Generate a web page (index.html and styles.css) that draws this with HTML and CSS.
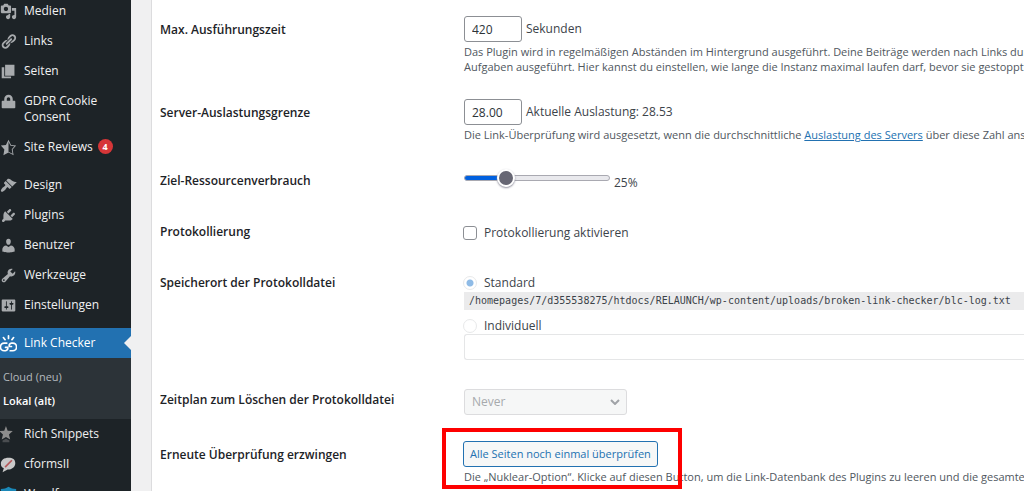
FILE: index.html
```html
<!DOCTYPE html>
<html lang="de">
<head>
    <meta charset="UTF-8">
    <title>Link Checker</title>
    <link rel="stylesheet" href="styles.css">
</head>
<body>
    <nav class="sidebar">
        <ul class="menu">
            <li><a href="#"><svg class="icon" viewBox="0 0 20 20"><path d="M13 11V4c0-.55-.45-1-1-1h-1.67L9 1H5L3.67 3H2c-.55 0-1 .45-1 1v7c0 .55.45 1 1 1h10c.55 0 1-.45 1-1zM7 4.5c1.38 0 2.5 1.12 2.5 2.5S8.38 9.5 7 9.5 4.5 8.38 4.5 7 5.62 4.5 7 4.5zM14 6h5v10.5c0 1.38-1.12 2.5-2.5 2.5S14 17.88 14 16.5s1.12-2.5 2.5-2.5c.17 0 .34.02.5.05V9h-3V6zm-4 8.05V13h2v3.5c0 1.38-1.12 2.5-2.5 2.5S7 17.88 7 16.5 8.12 14 9.5 14c.17 0 .34.02.5.05z"/></svg><span>Medien</span></a></li>
            <li><a href="#"><svg class="icon" viewBox="0 0 20 20"><path d="M17.74 2.76c1.68 1.69 1.68 4.41 0 6.1l-1.53 1.52c-1.12 1.12-2.7 1.47-4.14 1.09l2.62-2.61.76-.77.76-.76c.84-.84.84-2.2 0-3.04-.84-.85-2.2-.85-3.04 0l-.77.76-3.38 3.38c-.37-1.44-.02-3.02 1.1-4.14l1.52-1.53c1.69-1.68 4.42-1.68 6.1 0zM8.59 13.43l5.34-5.34c.42-.42.42-1.1 0-1.52-.44-.43-1.13-.39-1.53 0l-5.33 5.34c-.42.42-.42 1.1 0 1.52.44.43 1.13.39 1.52 0zm-.76 2.29l4.14-4.15c.38 1.44.03 3.02-1.09 4.14l-1.52 1.53c-1.69 1.68-4.41 1.68-6.1 0-1.68-1.68-1.68-4.42 0-6.1l1.53-1.52c1.12-1.12 2.7-1.47 4.14-1.1l-4.14 4.15c-.85.84-.85 2.2 0 3.05.84.84 2.2.84 3.04 0z"/></svg><span>Links</span></a></li>
            <li><a href="#"><svg class="icon" viewBox="0 0 20 20"><path d="M6 15V2h11v13H6zm-1 1h8v2H2V5h3v11z"/></svg><span>Seiten</span></a></li>
            <li><a href="#"><svg class="icon" viewBox="0 0 20 20"><path d="M15 9h2c.55 0 1 .45 1 1v7c0 .55-.45 1-1 1H3c-.55 0-1-.45-1-1v-7c0-.55.45-1 1-1h2V7c0-2.8 2.2-5 5-5s5 2.2 5 5v2zm-3 0V7c0-1.1-.9-2-2-2s-2 .9-2 2v2h4z"/></svg><span>GDPR Cookie Consent</span></a></li>
            <li><a href="#"><svg class="icon" viewBox="0 0 20 20"><path d="M10 1L7 7l-6 .75 4.13 4.62L4 19l6-3 6 3-1.12-6.63L19 7.75 13 7zm0 2.24l2.34 4.69 4.65.58-3.18 3.56.87 5.15L10 14.88V3.24z"/></svg><span>Site Reviews</span><b class="count">4</b></a></li>
            <li class="first"><a href="#"><svg class="icon" viewBox="0 0 20 20"><path d="M14.48 11.06L7.41 3.99l1.5-1.5c.5-.56 2.3-.47 3.51.32 1.21.8 1.43 1.28 2.91 2.1 1.18.64 2.45 1.26 4.45.85zm-.71.71L6.7 4.7 4.93 6.47c-.39.39-.39 1.02 0 1.41l1.06 1.06c.39.39.39 1.03 0 1.42-.6.6-1.43 1.11-2.21 1.69-.35.26-.7.53-1.01.84C1.43 14.23.4 16.08 1.4 17.07c.99 1 2.84-.03 4.18-1.36.31-.31.58-.66.85-1.02.57-.78 1.08-1.61 1.69-2.21.39-.39 1.02-.39 1.41 0l1.06 1.06c.39.39 1.02.39 1.41 0z"/></svg><span>Design</span></a></li>
            <li><a href="#"><svg class="icon" viewBox="0 0 20 20"><path d="M13.11 4.36L9.87 7.6 8 5.73l3.24-3.24c.35-.34 1.05-.2 1.56.32.52.51.66 1.21.31 1.55zm-8 1.77l.91-1.12 9.01 9.01-1.19.84c-.71.71-2.63 1.16-3.82 1.16H6.14L4.9 17.26c-.59.59-1.54.59-2.12 0-.59-.58-.59-1.53 0-2.12l1.24-1.24v-3.88c0-1.13.4-3.19 1.09-3.89zm7.26 3.97l3.24-3.24c.34-.35 1.04-.21 1.55.31.52.51.66 1.21.31 1.55l-3.24 3.25z"/></svg><span>Plugins</span></a></li>
            <li><a href="#"><svg class="icon" viewBox="0 0 20 20"><path d="M10 9.25c-2.27 0-2.73-3.44-2.73-3.44C7 4.02 7.82 2 9.97 2c2.16 0 2.98 2.02 2.71 3.81 0 0-.41 3.44-2.68 3.44zm0 2.57L12.72 10c2.39 0 4.52 2.33 4.52 4.53v2.49s-3.65 1.13-7.24 1.13c-3.65 0-7.24-1.13-7.24-1.13v-2.49c0-2.25 1.94-4.48 4.47-4.48z"/></svg><span>Benutzer</span></a></li>
            <li><a href="#"><svg class="icon" viewBox="0 0 20 20"><path d="M16.68 9.77c-1.34 1.34-3.3 1.67-4.95.99l-5.41 6.52c-.99.99-2.59.99-3.58 0s-.99-2.59 0-3.57l6.52-5.42c-.68-1.65-.35-3.61.99-4.95 1.28-1.28 3.12-1.62 4.72-1.06l-2.89 2.89 2.82 2.82 2.86-2.87c.53 1.58.18 3.39-1.08 4.65zM3.81 16.21c.4.39 1.04.39 1.43 0 .4-.4.4-1.04 0-1.43-.39-.4-1.03-.4-1.43 0-.39.39-.39 1.03 0 1.43z"/></svg><span>Werkzeuge</span></a></li>
            <li><a href="#"><svg class="icon" viewBox="0 0 20 20"><path d="M18 16V4c0-.55-.45-1-1-1H3c-.55 0-1 .45-1 1v12c0 .55.45 1 1 1h14c.55 0 1-.45 1-1zM8 11h1c.55 0 1 .45 1 1s-.45 1-1 1H8v1.5c0 .28-.22.5-.5.5s-.5-.22-.5-.5V13H6c-.55 0-1-.45-1-1s.45-1 1-1h1V5.5c0-.28.22-.5.5-.5s.5.22.5.5V11zm5-2h-1c-.55 0-1-.45-1-1s.45-1 1-1h1V5.5c0-.28.22-.5.5-.5s.5.22.5.5V7h1c.55 0 1 .45 1 1s-.45 1-1 1h-1v5.5c0 .28-.22.5-.5.5s-.5-.22-.5-.5V9z"/></svg><span>Einstellungen</span></a></li>
            <li class="first active">
                <a href="#"><svg class="icon line" viewBox="0 0 20 20"><path d="M10 1v3M4 3l2 2.500M16 3l-2 2.500M8 9.500H5a4.500 4.500 0 0 0 0 9h1.500a3 3 0 0 0 2.500-4H6.500M12 18.500h3a4.500 4.500 0 0 0 0-9h-1.500a3 3 0 0 0-2.500 4h2.500"/></svg><span>Link Checker</span></a>
                <ul class="submenu">
                    <li><a href="#">Cloud (neu)</a></li>
                    <li><a href="#" class="current">Lokal (alt)</a></li>
                </ul>
            </li>
            <li><a href="#"><svg class="icon dim" viewBox="0 0 20 20"><path d="M7 0l2 5.500 6 .5-4.500 4 1.500 6-5-3-5 3 1.500-6L-1 6l6-.5z"/><path class="shade" d="M3 17l4-2 4 2v2H3z"/></svg><span>Rich Snippets</span></a></li>
            <li><a href="#"><svg class="icon" viewBox="0 0 20 20"><path class="bubble" d="M10 2c5 0 8 2 8 6.500S14 16 9 16l-6 3 1.500-4.500C2 13 1 11.500 1 9c0-4.500 4-7 9-7z"/><path class="pen" d="M6 13l8-8"/></svg><span>cformsII</span></a></li>
            <li><a href="#"><svg class="icon shield" viewBox="0 0 20 20"><path d="M10 1c3 2 5 2.500 9 2.500V11c0 4-4 7-9 9-5-2-9-5-9-9V3.500C5 3.500 7 3 10 1z"/></svg><span>Wordfence</span></a></li>
        </ul>
    </nav>
    <main class="content">
        <form class="panel">
            <table class="form-table">
                <tr>
                    <th><label for="max-time">Max. Ausführungszeit</label></th>
                    <td>
                        <div class="field"><input class="small" type="text" id="max-time" value="420"> <span>Sekunden</span></div>
                        <p>Das Plugin wird in regelmäßigen Abständen im Hintergrund ausgeführt. Deine Beiträge werden nach Links durchsucht<br>Aufgaben ausgeführt. Hier kannst du einstellen, wie lange die Instanz maximal laufen darf, bevor sie gestoppt wird.</p>
                    </td>
                </tr>
                <tr>
                    <th><label for="load">Server-Auslastungsgrenze</label></th>
                    <td>
                        <div class="field"><input class="small" type="text" id="load" value="28.00"> <span>Aktuelle Auslastung: 28.53</span></div>
                        <p>Die Link-Überprüfung wird ausgesetzt, wenn die durchschnittliche <a href="#">Auslastung des Servers</a> über diese Zahl ansteigt.</p>
                    </td>
                </tr>
                <tr class="row-slider">
                    <th><label for="usage">Ziel-Ressourcenverbrauch</label></th>
                    <td>
                        <div class="slider"><input type="range" id="usage" min="0" max="100" value="25"><output for="usage">25%</output></div>
                    </td>
                </tr>
                <tr class="row-check">
                    <th>Protokollierung</th>
                    <td><label class="choice"><input type="checkbox"><span>Protokollierung aktivieren</span></label></td>
                </tr>
                <tr class="row-log">
                    <th>Speicherort der Protokolldatei</th>
                    <td>
                        <label class="choice"><input type="radio" name="log" checked disabled><span>Standard</span></label>
                        <code>/homepages/7/d355538275/htdocs/RELAUNCH/wp-content/uploads/broken-link-checker/blc-log.txt</code>
                        <label class="choice"><input type="radio" name="log" disabled><span>Individuell</span></label>
                        <input class="path" type="text" aria-label="Individuell" disabled>
                    </td>
                </tr>
                <tr class="row-plan">
                    <th><label for="plan">Zeitplan zum Löschen der Protokolldatei</label></th>
                    <td>
                        <div class="select">
                            <select id="plan" disabled><option>Never</option></select>
                            <svg viewBox="0 0 10 6"><path d="M1 1l4 4 4-4"/></svg>
                        </div>
                    </td>
                </tr>
                <tr>
                    <th>Erneute Überprüfung erzwingen</th>
                    <td>
                        <div class="recheck">
                            <button type="button">Alle Seiten noch einmal überprüfen</button>
                            <p>Die „Nuklear-Option“. Klicke auf diesen Button, um die Link-Datenbank des Plugins zu leeren und die gesamte Website</p>
                            <span class="marker"></span>
                        </div>
                    </td>
                </tr>
            </table>
        </form>
    </main>
</body>
</html>
```
FILE: styles.css
```css
*{
    box-sizing: border-box;
    margin: 0;
    padding: 0;
}
body{
    display: flex;
    height: 100vh;
    overflow: hidden;
    background: #f0f0f1;
    color: #3c434a;
    font: 12px/16px "Open Sans", "Noto Sans", sans-serif;
}
ul{
    list-style: none;
}
.sidebar{
    flex: 0 0 131px;
    background: #1d2327;
}
.menu{
    margin-top: -4px;
}
.menu a{
    display: flex;
    padding: 7px 0;
    color: #f0f0f1;
    text-decoration: none;
}
.menu .first{
    margin-top: 8px;
}
.icon{
    flex: none;
    width: 17px;
    height: 17px;
    margin: 0 7px -1px 0;
    fill: #a7aaad;
}
.line{
    fill: none;
    stroke: #fff;
    stroke-width: 2;
    stroke-linecap: round;
}
.dim{
    fill: #8c8c8c;
}
.shade{
    fill: #4a4d50;
}
.bubble{
    fill: #c9c9c9;
}
.pen{
    stroke: #b5585a;
    stroke-width: 2;
}
.shield{
    fill: #1b88b8;
}
.count{
    width: 15px;
    height: 15px;
    margin-left: 5px;
    border-radius: 50%;
    background: #d63638;
    color: #fff;
    font-size: 9px;
    line-height: 15px;
    text-align: center;
}
.active > a{
    position: relative;
    background: #2271b1;
    color: #fff;
}
.active > a::after{
    content: "";
    position: absolute;
    top: 8px;
    right: 0;
    border: 7px solid transparent;
    border-left: 0;
    border-right-color: #f0f0f1;
}
.submenu{
    padding: 7px 3px 6px;
    background: #2c3338;
}
.submenu a{
    padding: 4px 0;
    color: #b4b9be;
    font-size: 11px;
}
.submenu .current{
    color: #fff;
    font-weight: 600;
}
.content{
    flex: 1;
    min-width: 0;
    padding-left: 20px;
}
.panel{
    height: 100%;
    padding: 3px 0 0 8px;
    border-left: 1px solid #dcdcde;
    background: #fff;
    overflow: hidden;
}
.form-table{
    width: 100%;
    table-layout: fixed;
    border-collapse: collapse;
}
th{
    width: 304px;
    padding-top: 19px;
    color: #1d2327;
    font-weight: 600;
    text-align: left;
    vertical-align: top;
}
td{
    padding: 13px 0 12px;
    vertical-align: top;
    white-space: nowrap;
}
p{
    margin-top: 2px;
    color: #50575e;
    font-size: 11px;
    line-height: 15px;
}
p a{
    color: #2271b1;
}
input, select, button{
    font: inherit;
    color: #2c3338;
}
.field{
    display: flex;
    align-items: center;
    gap: 4px;
}
.small{
    width: 58px;
    height: 26px;
    padding: 0 7px;
    border: 1px solid #8c8f94;
    border-radius: 3px;
}
.row-slider td{
    padding: 16px 0 14px;
}
.slider{
    display: flex;
    gap: 4px;
}
output{
    padding-top: 5px;
}
input[type="range"]{
    appearance: none;
    width: 146px;
    height: 16px;
    border-radius: 3px;
    background: none;
}
input[type="range"]::-webkit-slider-runnable-track{
    height: 6px;
    border: 1px solid #a9a9b1;
    border-radius: 3px;
    background: linear-gradient(to right, #0060df 28%, #e9e9ed 28%) border-box;
}
input[type="range"]::-webkit-slider-thumb{
    appearance: none;
    width: 18px;
    height: 18px;
    margin-top: -7px;
    border: 2px solid #fff;
    border-radius: 50%;
    background: #676774;
    box-shadow: 0 1px 2px #8f8f9d;
}
.row-check td{
    padding: 20px 0 15px;
}
.choice{
    display: flex;
    align-items: center;
    gap: 7px;
    height: 16px;
}
.choice input{
    appearance: none;
    width: 14px;
    height: 14px;
    margin-left: -1px;
    border: 1px solid #8c8f94;
    border-radius: 3px;
}
.choice input[type="radio"]{
    border-color: #e8e9ea;
    border-radius: 50%;
}
.choice input[type="radio"]:checked{
    background: radial-gradient(circle, #8fbbe6 3px, #fff 4px);
}
.row-log td{
    padding: 19px 0 13px;
}
code{
    display: block;
    height: 18px;
    margin: 1px 0 8px;
    padding: 0 5px;
    background: #ebebec;
    font: 10px/18px "DejaVu Sans Mono", monospace;
}
.path{
    display: block;
    width: 100%;
    height: 26px;
    border: 1px solid #e5e6e7;
    border-right: 0;
    border-radius: 3px 0 0 3px;
    background: #fff;
}
.row-plan td{
    padding: 16px 0 13px;
}
.select{
    position: relative;
    width: 163px;
}
.select select{
    display: block;
    appearance: none;
    width: 100%;
    height: 26px;
    padding: 0 7px;
    border: 1px solid #dcdcde;
    border-radius: 3px;
    background: #f6f7f7;
    color: #a7aaad;
    opacity: 1;
}
.select svg{
    position: absolute;
    top: 10px;
    right: 7px;
    width: 10px;
    height: 6px;
    fill: none;
    stroke: #a0a3a7;
    stroke-width: 2;
}
.recheck{
    position: relative;
}
button{
    display: block;
    height: 26px;
    padding: 0 6px;
    margin-left: -1px;
    border: 1px solid #2271b1;
    border-radius: 3px;
    background: #f6f7f7;
    color: #2271b1;
    font-size: 11px;
}
.marker{
    position: absolute;
    top: -13px;
    left: -22px;
    width: 240px;
    height: 61px;
    border: 4px solid #fe0000;
    pointer-events: none;
}
```
